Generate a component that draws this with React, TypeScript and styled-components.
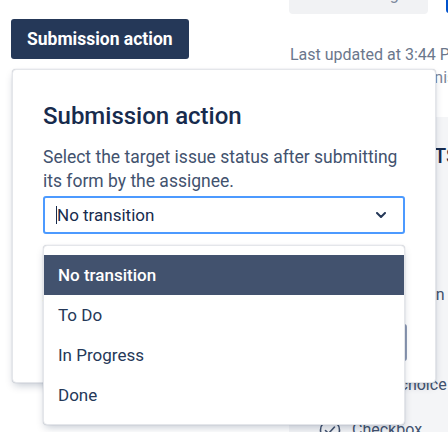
import React from "react";
import styled, { createGlobalStyle } from "styled-components";

const GlobalStyle = createGlobalStyle`
  html, body {
    margin: 0;
    padding: 0;
    background: #fff;
  }
  body {
    font-family: Roboto, "Liberation Sans", sans-serif;
    -webkit-font-smoothing: antialiased;
  }
`;

const Page = styled.div`
  position: relative;
  width: 448px;
  height: 432px;
  overflow: hidden;
  display: grid;
  grid-template-columns: 289px 1fr;
  background: #fff;
`;

const LeftPane = styled.div`
  padding: 19px 0 0 11px;
`;

const PrimaryButton = styled.button`
  height: 40px;
  padding: 0 16px;
  border: 0;
  border-radius: 3px;
  background: #253858;
  color: #fff;
  font-family: Roboto, "Liberation Sans", sans-serif;
  font-size: 17.5px;
  font-weight: 700;
  line-height: 40px;
  cursor: pointer;
`;

const RightPane = styled.div`
  display: flex;
  flex-direction: column;
  min-width: 0;
  white-space: nowrap;
`;

const TopRow = styled.div`
  display: flex;
  align-items: flex-end;
  height: 14px;
`;

const SearchBox = styled.div`
  flex: none;
  width: 139px;
  height: 38px;
  box-sizing: border-box;
  padding-left: 30px;
  border-radius: 4px;
  background: #f1f2f4;
  color: #7a869a;
  font-size: 16px;
  line-height: 38px;
  overflow: hidden;
`;

const BlueTab = styled.div`
  flex: none;
  width: 40px;
  height: 13px;
  margin-left: 18px;
  align-self: flex-start;
  border-radius: 0 0 0 3px;
  background: #0052cc;
`;

const Updated = styled.div`
  padding: 31px 0 0 1px;
  font-size: 16px;
  line-height: 20px;
  color: #6b778c;
`;

const Meta = styled.div`
  margin-top: 3px;
  padding-left: 22px;
  font-size: 16px;
  line-height: 20px;
  color: #7a869a;
`;

const Palette = styled.div`
  flex: 1;
  margin-top: 29px;
  padding: 27px 0 0 9px;
  background: #f4f5f7;
`;

const PaletteTitle = styled.div`
  font-size: 20px;
  font-weight: 500;
  line-height: 24px;
  color: #172b4d;
`;

const PaletteList = styled.div`
  margin-top: 14px;
  padding-left: 20px;
`;

const PaletteRow = styled.div`
  display: flex;
  align-items: center;
  gap: 10px;
  height: 45px;
  font-size: 16px;
  color: #42526e;
`;

const Card = styled.div`
  position: absolute;
  left: 12px;
  top: 69px;
  width: 424px;
  box-sizing: border-box;
  padding: 32px 30px 21px;
  border: 1px solid #e4e6ea;
  border-radius: 4px;
  background: #fff;
  box-shadow: 0 4px 8px -2px rgba(9, 30, 66, 0.25), 0 0 1px rgba(9, 30, 66, 0.31);
`;

const Title = styled.h2`
  margin: 0 0 16px;
  font-size: 24px;
  font-weight: 500;
  line-height: 28px;
  color: #172b4d;
`;

const Description = styled.p`
  margin: 0;
  font-size: 17.5px;
  line-height: 23.5px;
  color: #42526e;
`;

const SelectWrap = styled.div`
  position: relative;
  margin-top: 3px;
`;

const SelectBox = styled.div`
  display: flex;
  align-items: center;
  height: 38px;
  box-sizing: border-box;
  padding: 0 17px 0 11px;
  border: 2px solid #4c9aff;
  border-radius: 3px;
  background: #fff;
  font-size: 17px;
  color: #172b4d;
`;

const Caret = styled.span`
  width: 1px;
  height: 18px;
  background: #172b4d;
`;

const Chevron = styled.svg`
  margin-left: auto;
`;

const Menu = styled.div`
  position: absolute;
  top: calc(100% + 11px);
  left: 0;
  right: 0;
  z-index: 2;
  padding: 9px 0;
  border: 1px solid #e4e6ea;
  border-radius: 4px;
  background: #fff;
  box-shadow: 0 4px 8px -2px rgba(9, 30, 66, 0.25), 0 0 1px rgba(9, 30, 66, 0.31);
`;

const MenuItem = styled.div<{ $active?: boolean }>`
  display: flex;
  align-items: center;
  height: 40px;
  padding: 0 14px;
  font-size: 17px;
  font-weight: ${(p) => (p.$active ? 500 : 400)};
  color: ${(p) => (p.$active ? "#fff" : "#253858")};
  background: ${(p) => (p.$active ? "#42526e" : "transparent")};
`;

const FieldLabel = styled.div`
  margin: 62px 0 8px;
  font-size: 14px;
  line-height: 20px;
  color: #6b778c;
`;

const Field = styled.div`
  height: 37px;
  margin-right: -2px;
  box-sizing: border-box;
  border: 2px solid #8f9bb5;
  border-radius: 3px;
  background: #fafbfc;
`;

const Icon = ({ kind }: { kind: string }) => (
  <svg width="24" height="24" viewBox="0 0 24 24" fill="none" stroke="#42526e" strokeWidth="1.6" strokeLinecap="round" strokeLinejoin="round">
    {kind === "text" && <path d="M5 8h14M5 12h9" />}
    {kind === "para" && <path d="M5 7h14M5 11h14M5 15h14M5 19h8" />}
    {kind === "info" && (
      <>
        <circle cx="12" cy="12" r="9.5" />
        <path d="M12 11v6M12 7.5v.5" />
      </>
    )}
    {kind === "number" && <path d="M9 4l-2 16M17 4l-2 16M4 9h16M3 15h16" />}
    {kind === "radio" && (
      <>
        <circle cx="12" cy="12" r="9.5" />
        <circle cx="12" cy="12" r="4" fill="#42526e" />
      </>
    )}
    {kind === "check" && (
      <>
        <circle cx="12" cy="12" r="9.5" />
        <path d="M7.5 12.5l3 3 6-6.5" />
      </>
    )}
  </svg>
);

const elements = [
  { icon: "text", label: "Short text" },
  { icon: "para", label: "Paragraph" },
  { icon: "info", label: "Confirmation" },
  { icon: "number", label: "Number" },
  { icon: "radio", label: "Single choice" },
  { icon: "check", label: "Checkbox" },
];

const options = ["No transition", "To Do", "In Progress", "Done"];

export default function App() {
  return (
    <Page>
      <GlobalStyle />
      <LeftPane>
        <PrimaryButton>Submission action</PrimaryButton>
      </LeftPane>
      <RightPane>
        <TopRow>
          <SearchBox>Autosaving</SearchBox>
          <BlueTab />
        </TopRow>
        <Updated>Last updated at 3:44 PM</Updated>
        <Meta>Shared with administrators</Meta>
        <Palette>
          <PaletteTitle>FORM ELEMENTS</PaletteTitle>
          <PaletteList>
            {elements.map((el) => (
              <PaletteRow key={el.label}>
                <Icon kind={el.icon} />
                {el.label}
              </PaletteRow>
            ))}
          </PaletteList>
        </Palette>
      </RightPane>

      <Card>
        <Title>Submission action</Title>
        <Description>
          Select the target issue status after submitting its form by the assignee.
        </Description>
        <SelectWrap>
          <SelectBox>
            <Caret />
            No transition
            <Chevron width="10" height="6" viewBox="0 0 10 6" fill="none">
              <path d="M1 1l4 4 4-4" stroke="#253858" strokeWidth="2" strokeLinecap="round" strokeLinejoin="round" />
            </Chevron>
          </SelectBox>
          <Menu>
            {options.map((o, i) => (
              <MenuItem key={o} $active={i === 0}>
                {o}
              </MenuItem>
            ))}
          </Menu>
        </SelectWrap>
        <FieldLabel>Transition comment</FieldLabel>
        <Field />
      </Card>
    </Page>
  );
}
